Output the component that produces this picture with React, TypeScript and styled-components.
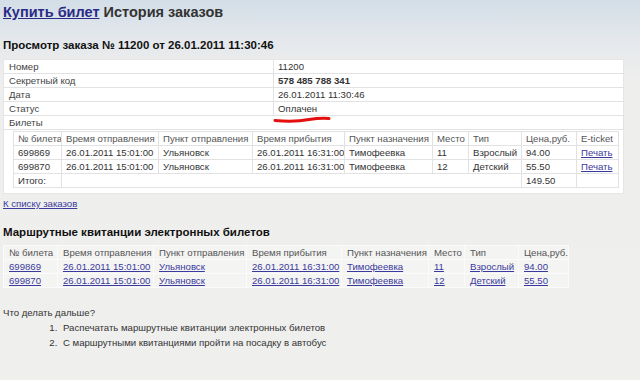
import styled, { createGlobalStyle } from 'styled-components';

const GlobalStyle = createGlobalStyle`
  html, body {
    margin: 0;
    padding: 0;
  }
  body {
    width: 640px;
    height: 380px;
    overflow: hidden;
    background: linear-gradient(to bottom, #d3dee8 0px, #e6e9ec 45px, #eeeeed 80px, #efefee 100%);
    font-family: 'Liberation Sans', Arial, sans-serif;
    font-size: 9.6px;
    color: #333;
  }
`;

type Ticket = {
  number: string;
  departTime: string;
  from: string;
  arriveTime: string;
  to: string;
  seat: string;
  kind: string;
  price: string;
};

const tickets: Ticket[] = [
  {
    number: '699869',
    departTime: '26.01.2011 15:01:00',
    from: 'Ульяновск',
    arriveTime: '26.01.2011 16:31:00',
    to: 'Тимофеевка',
    seat: '11',
    kind: 'Взрослый',
    price: '94.00',
  },
  {
    number: '699870',
    departTime: '26.01.2011 15:01:00',
    from: 'Ульяновск',
    arriveTime: '26.01.2011 16:31:00',
    to: 'Тимофеевка',
    seat: '12',
    kind: 'Детский',
    price: '55.50',
  },
];

const columns = [
  '№ билета',
  'Время отправления',
  'Пункт отправления',
  'Время прибытия',
  'Пункт назначения',
  'Место',
  'Тип',
  'Цена,руб.',
];

const orderWidths = [48, 97, 94, 92, 88, 36, 53, 55, 42];
const receiptWidths = [54, 96, 93, 95, 87, 36, 54, 50];

const OrderTickets = () => (
  <S.InnerTable>
    <colgroup>
      {orderWidths.map((w, i) => (
        <col key={i} style={{ width: w }} />
      ))}
    </colgroup>
    <tbody>
      <tr>
        {columns.map((c) => (
          <S.Head key={c}>{c}</S.Head>
        ))}
        <S.Head>E-ticket</S.Head>
      </tr>
      {tickets.map((t) => (
        <tr key={t.number}>
          <S.Cell>{t.number}</S.Cell>
          <S.Cell>{t.departTime}</S.Cell>
          <S.Cell>{t.from}</S.Cell>
          <S.Cell>{t.arriveTime}</S.Cell>
          <S.Cell>{t.to}</S.Cell>
          <S.Cell>{t.seat}</S.Cell>
          <S.Cell>{t.kind}</S.Cell>
          <S.Cell>{t.price}</S.Cell>
          <S.Cell>
            <S.Link href="#">Печать</S.Link>
          </S.Cell>
        </tr>
      ))}
      <tr>
        <S.Cell>Итого:</S.Cell>
        <S.Cell colSpan={6} />
        <S.Cell>149.50</S.Cell>
        <S.Cell />
      </tr>
    </tbody>
  </S.InnerTable>
);

const Receipts = () => (
  <S.ReceiptTable>
    <colgroup>
      {receiptWidths.map((w, i) => (
        <col key={i} style={{ width: w }} />
      ))}
    </colgroup>
    <tbody>
      <tr>
        {columns.map((c) => (
          <S.ReceiptHead key={c}>{c}</S.ReceiptHead>
        ))}
      </tr>
      {tickets.map((t) => (
        <tr key={t.number}>
          {[t.number, t.departTime, t.from, t.arriveTime, t.to, t.seat, t.kind, t.price].map((v, i) => (
            <S.ReceiptCell key={i}>
              <S.Link href="#">{v}</S.Link>
            </S.ReceiptCell>
          ))}
        </tr>
      ))}
    </tbody>
  </S.ReceiptTable>
);

const App = () => {
  return (
    <>
      <GlobalStyle />
      <S.Page>
        <S.Title>
          <S.TitleLink href="#">Купить билет</S.TitleLink> История заказов
        </S.Title>

        <S.Heading>Просмотр заказа № 11200 от 26.01.2011 11:30:46</S.Heading>

        <S.InfoWrap>
          <S.InfoTable>
            <tbody>
              <tr>
                <S.Label>Номер</S.Label>
                <S.Value>11200</S.Value>
              </tr>
              <tr>
                <S.Label>Секретный код</S.Label>
                <S.Value $bold>578 485 788 341</S.Value>
              </tr>
              <tr>
                <S.Label>Дата</S.Label>
                <S.Value>26.01.2011 11:30:46</S.Value>
              </tr>
              <tr>
                <S.Label>Статус</S.Label>
                <S.Value>Оплачен</S.Value>
              </tr>
              <tr>
                <S.Label colSpan={2}>Билеты</S.Label>
              </tr>
              <tr>
                <S.Nested colSpan={2}>
                  <OrderTickets />
                </S.Nested>
              </tr>
            </tbody>
          </S.InfoTable>
          <S.Mark width="58" height="7" viewBox="0 0 58 7">
            <path d="M2 4.5 C 14 5.5, 28 5, 36 3.6 C 44 2.4, 52 2.2, 56 2.6" stroke="#e41010" strokeWidth="3" fill="none" strokeLinecap="round" />
          </S.Mark>
        </S.InfoWrap>

        <S.BackLink href="#">К списку заказов</S.BackLink>

        <S.SubHeading>Маршрутные квитанции электронных билетов</S.SubHeading>
        <Receipts />

        <S.Next>Что делать дальше?</S.Next>
        <S.Steps>
          <li>Распечатать маршрутные квитанции электронных билетов</li>
          <li>С маршрутными квитанциями пройти на посадку в автобус</li>
        </S.Steps>
      </S.Page>
    </>
  );
};

const S = {
  Page: styled.div`
    display: flex;
    flex-direction: column;
    align-items: flex-start;
    padding: 3px 0 0 3px;
  `,

  Title: styled.h1`
    margin: 0;
    font-size: 14.5px;
    line-height: 18px;
    font-weight: bold;
    color: #333;
  `,

  TitleLink: styled.a`
    color: #2b2b86;
    text-decoration: underline;
  `,

  Heading: styled.h2`
    margin: 17px 0 7px;
    font-size: 11.5px;
    line-height: 14px;
    font-weight: bold;
    color: #111;
  `,

  InfoWrap: styled.div`
    position: relative;
  `,

  InfoTable: styled.table`
    width: 619px;
    border-collapse: collapse;
    background: #fff;
    border: 1px solid #e6e6e6;
  `,

  Label: styled.td`
    width: 264px;
    height: 13px;
    padding: 0 0 0 5px;
    border-bottom: 1px solid #e2e2e2;
    border-right: 1px solid #e2e2e2;
    line-height: 13px;
    color: #444;
  `,

  Value: styled.td<{ $bold?: boolean }>`
    height: 13px;
    padding: 0 0 0 4px;
    border-bottom: 1px solid #e2e2e2;
    line-height: 13px;
    color: #333;
    font-weight: ${(p) => (p.$bold ? 'bold' : 'normal')};
  `,

  Nested: styled.td`
    padding: 1px 4px 5px 9px;
  `,

  Mark: styled.svg`
    position: absolute;
    left: 270px;
    top: 57px;
  `,

  InnerTable: styled.table`
    width: 605px;
    border-collapse: collapse;
    table-layout: fixed;
    background: #fff;
  `,

  Head: styled.td`
    height: 13px;
    padding: 0 0 0 4px;
    line-height: 13px;
    border: 1px solid #e2e2e2;
    color: #555;
    white-space: nowrap;
    overflow: hidden;
  `,

  Cell: styled.td`
    height: 13px;
    padding: 0 0 0 4px;
    line-height: 13px;
    border: 1px solid #e2e2e2;
    color: #333;
    white-space: nowrap;
    overflow: hidden;
  `,

  Link: styled.a`
    color: #3a3a9c;
    text-decoration: underline;
  `,

  BackLink: styled.a`
    margin-top: 3px;
    line-height: 14px;
    color: #3a3a9c;
    text-decoration: underline;
  `,

  SubHeading: styled.h2`
    margin: 14px 0 6px;
    font-size: 11.5px;
    line-height: 14px;
    font-weight: bold;
    color: #111;
  `,

  ReceiptTable: styled.table`
    width: 565px;
    border-collapse: collapse;
    table-layout: fixed;
    background: #f4f4f3;
  `,

  ReceiptHead: styled.td`
    height: 13px;
    padding: 0 0 0 5px;
    line-height: 13px;
    border: 1px solid #fbfbfb;
    color: #555;
    white-space: nowrap;
    overflow: hidden;
  `,

  ReceiptCell: styled.td`
    height: 13px;
    padding: 0 0 0 5px;
    line-height: 13px;
    border: 1px solid #fbfbfb;
    white-space: nowrap;
    overflow: hidden;
  `,

  Next: styled.p`
    margin: 18px 0 0;
    line-height: 14px;
    color: #333;
  `,

  Steps: styled.ol`
    margin: 0;
    padding-left: 57px;
    line-height: 15px;
    color: #333;

    li {
      padding-left: 3px;
    }
  `,
};

export default App;
